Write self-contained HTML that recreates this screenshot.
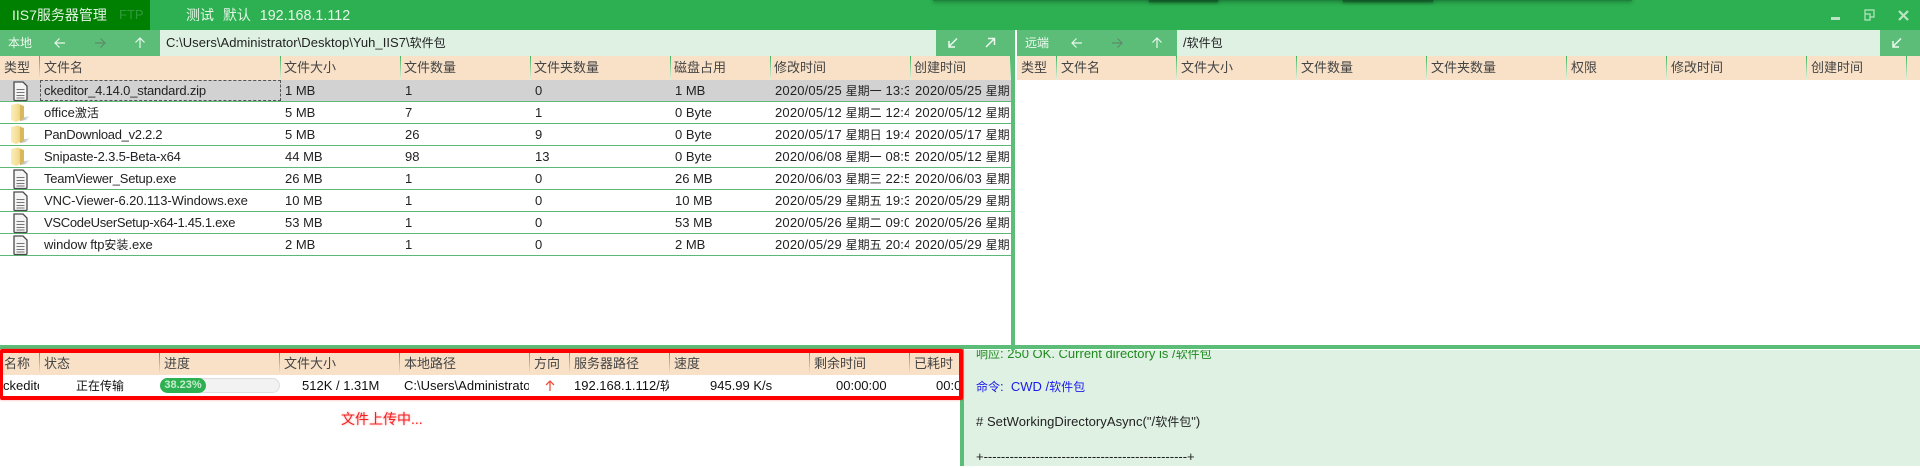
<!DOCTYPE html>
<html><head><meta charset="utf-8">
<style>
*{box-sizing:border-box}
html,body{margin:0;padding:0;width:1920px;height:466px;overflow:hidden;background:#fff;font-family:"Liberation Sans","Noto Sans CJK SC",sans-serif;color:#222}
.a{position:absolute;white-space:nowrap}
.t{font-size:13px;line-height:22px;height:22px;overflow:hidden;white-space:nowrap;position:absolute}
.d{letter-spacing:.18px}
.c{font-size:12px;letter-spacing:0}
.h{font-size:13px;line-height:24px;color:#444;position:absolute;white-space:nowrap}
.hb{position:absolute;background:#f8e1c7}
.sep{position:absolute;width:1px;background:linear-gradient(#3fb560,#e8f0e0)}
.rl{position:absolute;height:1px;background:#5cb876;left:0;width:1011px}
svg{position:absolute;overflow:visible}
</style></head><body>
<!-- title -->
<div class="a" style="left:0;top:0;width:1920px;height:30px;background:#2db051"></div>
<div class="a" style="left:933px;top:-3px;width:699px;height:4px;box-shadow:0 1px 4px 0 rgba(0,50,20,.45);background:rgba(0,50,20,.35)"></div>
<div class="a" style="left:1149px;top:-3px;width:69px;height:5px;box-shadow:0 1px 3px 0 rgba(0,40,15,.45);background:rgba(0,40,15,.45)"></div>
<div class="a" style="left:1343px;top:-3px;width:90px;height:5px;box-shadow:0 1px 3px 0 rgba(0,40,15,.45);background:rgba(0,40,15,.45)"></div>
<div class="a" style="left:0;top:0;width:150px;height:30px;background:#008000"></div>
<div class="a" style="left:12px;top:0;line-height:30px;font-size:14px;color:#e4f5e6">IIS7服务器管理</div>
<div class="a" style="left:119px;top:0;line-height:30px;font-size:13px;color:#2f9a3c">FTP</div>
<div class="a" style="left:186px;top:0;line-height:30px;font-size:14px;color:#e4f5e6;word-spacing:5px">测试 默认 <span style="font-size:14.3px">192.168.1.112</span></div>
<svg style="left:1820px;top:8px" width="100" height="18" fill="none" stroke="#b9e5c4" stroke-width="2">
<path d="M11 10.500H20" stroke-width="3"/>
<path d="M45 5.500V1H54V8H50M45 5H50V11H45Z" stroke-width="1.2" transform="translate(0,1)" />
<path d="M79 3L88 12M88 3L79 12" stroke-width="2.2"/>
</svg>
<!-- local toolbar -->
<div class="a" style="left:0;top:30px;width:1011px;height:26px;background:#dff1e3"></div>
<div class="a" style="left:0;top:30px;width:160px;height:26px;background:#5cbd78"></div>
<div class="a" style="left:8px;top:30px;line-height:26px;font-size:12px;color:#eef9f0">本地</div>
<svg style="left:0;top:30px" width="160" height="26" fill="none" stroke-width="1.2">
<path d="M65 13H55M59.500 8.500L55 13L59.500 17.500" stroke="#e8f7ec"/>
<path d="M95 13H105M100.500 8.500L105 13L100.500 17.500" stroke="#5f8a6c"/>
<path d="M140 18V8M135.500 12.500L140 8L144.500 12.500" stroke="#e8f7ec"/>
</svg>
<div class="a" style="left:166px;top:30px;line-height:26px;font-size:13px;color:#222;letter-spacing:.04px">C:\Users\Administrator\Desktop\Yuh_IIS7\<span class="c">软件包</span></div>
<div class="a" style="left:936px;top:30px;width:75px;height:26px;background:#5cbd78"></div>
<svg style="left:936px;top:30px" width="75" height="26" fill="none" stroke="#eef9f0" stroke-width="1.500">
<path d="M21 8.500L13 16.500M13 11V17H19"/>
<path d="M50 17L58 9M52 8.500H58.500V15"/>
</svg>
<!-- divider -->
<div class="a" style="left:1011px;top:30px;width:4px;height:320px;background:#5cbd78"></div>
<!-- remote toolbar -->
<div class="a" style="left:1017px;top:30px;width:903px;height:26px;background:#dff1e3"></div>
<div class="a" style="left:1017px;top:30px;width:160px;height:26px;background:#5cbd78"></div>
<div class="a" style="left:1025px;top:30px;line-height:26px;font-size:12px;color:#eef9f0">远端</div>
<svg style="left:1017px;top:30px" width="160" height="26" fill="none" stroke-width="1.2">
<path d="M65 13H55M59.500 8.500L55 13L59.500 17.500" stroke="#e8f7ec"/>
<path d="M95 13H105M100.500 8.500L105 13L100.500 17.500" stroke="#5f8a6c"/>
<path d="M140 18V8M135.500 12.500L140 8L144.500 12.500" stroke="#e8f7ec"/>
</svg>
<div class="a" style="left:1183px;top:30px;line-height:26px;font-size:13px;color:#222">/<span class="c">软件包</span></div>
<div class="a" style="left:1880px;top:30px;width:40px;height:26px;background:#5cbd78"></div>
<svg style="left:1880px;top:30px" width="40" height="26" fill="none" stroke="#eef9f0" stroke-width="1.500">
<path d="M21 8.500L13 16.500M13 11V17H19"/>
</svg>
<!-- local header -->
<div class="hb" style="left:0;top:56px;width:1011px;height:24px"></div>
<div class="h" style="left:4px;top:56px">类型</div><div class="h" style="left:44px;top:56px">文件名</div><div class="h" style="left:284px;top:56px">文件大小</div><div class="h" style="left:404px;top:56px">文件数量</div><div class="h" style="left:534px;top:56px">文件夹数量</div><div class="h" style="left:674px;top:56px">磁盘占用</div><div class="h" style="left:774px;top:56px">修改时间</div><div class="h" style="left:914px;top:56px">创建时间</div>
<div class="sep" style="left:39px;top:56px;height:24px"></div><div class="sep" style="left:280px;top:56px;height:24px"></div><div class="sep" style="left:400px;top:56px;height:24px"></div><div class="sep" style="left:530px;top:56px;height:24px"></div><div class="sep" style="left:670px;top:56px;height:24px"></div><div class="sep" style="left:770px;top:56px;height:24px"></div><div class="sep" style="left:910px;top:56px;height:24px"></div><div class="sep" style="left:1010px;top:56px;height:24px"></div>
<!-- remote header -->
<div class="hb" style="left:1017px;top:56px;width:903px;height:24px"></div>
<div class="h" style="left:1021px;top:56px">类型</div><div class="h" style="left:1061px;top:56px">文件名</div><div class="h" style="left:1181px;top:56px">文件大小</div><div class="h" style="left:1301px;top:56px">文件数量</div><div class="h" style="left:1431px;top:56px">文件夹数量</div><div class="h" style="left:1571px;top:56px">权限</div><div class="h" style="left:1671px;top:56px">修改时间</div><div class="h" style="left:1811px;top:56px">创建时间</div>
<div class="sep" style="left:1056px;top:56px;height:24px"></div><div class="sep" style="left:1176px;top:56px;height:24px"></div><div class="sep" style="left:1296px;top:56px;height:24px"></div><div class="sep" style="left:1426px;top:56px;height:24px"></div><div class="sep" style="left:1566px;top:56px;height:24px"></div><div class="sep" style="left:1666px;top:56px;height:24px"></div><div class="sep" style="left:1806px;top:56px;height:24px"></div><div class="sep" style="left:1906px;top:56px;height:24px"></div>
<!-- selected row -->
<div class="a" style="left:0;top:80px;width:1011px;height:21px;background:#d2d2d2"></div>
<div class="a" style="left:40px;top:80px;width:241px;height:21px;border:1px dashed #555"></div>
<!-- row lines -->
<div class="rl" style="top:101px"></div><div class="rl" style="top:123px"></div><div class="rl" style="top:145px"></div><div class="rl" style="top:167px"></div><div class="rl" style="top:189px"></div><div class="rl" style="top:211px"></div><div class="rl" style="top:233px"></div><div class="rl" style="top:255px"></div>
<!-- icons -->
<svg style="left:0;top:0" width="40" height="260">
<defs>
<linearGradient id="fg" x1="0" x2="1" y1="0" y2="0"><stop offset="0" stop-color="#fbeeb9"/><stop offset=".55" stop-color="#f3dd92"/><stop offset="1" stop-color="#dcbc5e"/></linearGradient>
<linearGradient id="sh" x1="0" x2="1" y1="0" y2="0"><stop offset="0" stop-color="#aaa"/><stop offset="1" stop-color="#eee"/></linearGradient>
</defs>
<g fill="#f4f4f4" stroke="#4a4a4a" stroke-width="1.300">
<path d="M14 82H23L27 86V99.500Q27 100.500 26 100.500H15Q14 100.500 14 99.500Z"/>
<path d="M14 170H23L27 174V187.500Q27 188.500 26 188.500H15Q14 188.500 14 187.500Z"/>
<path d="M14 192H23L27 196V209.500Q27 210.500 26 210.500H15Q14 210.500 14 209.500Z"/>
<path d="M14 214H23L27 218V231.500Q27 232.500 26 232.500H15Q14 232.500 14 231.500Z"/>
<path d="M14 236H23L27 240V253.500Q27 254.500 26 254.500H15Q14 254.500 14 253.500Z"/>
</g>
<g stroke="#777" stroke-width="1" fill="none">
<path d="M16.500 89.500H24.500M16.500 92.500H24.500M16.500 95.500H24.500M16.500 98H24.500"/>
<path d="M16.500 177.500H24.500M16.500 180.500H24.500M16.500 183.500H24.500M16.500 186H24.500"/>
<path d="M16.500 199.500H24.500M16.500 202.500H24.500M16.500 205.500H24.500M16.500 208H24.500"/>
<path d="M16.500 221.500H24.500M16.500 224.500H24.500M16.500 227.500H24.500M16.500 230H24.500"/>
<path d="M16.500 243.500H24.500M16.500 246.500H24.500M16.500 249.500H24.500M16.500 252H24.500"/>
</g>
<g transform="translate(0,0)">
<path d="M20 118L30 116L26 120L20 121Z" fill="url(#sh)"/><path d="M11 105L18 103.500L24 106V118L16 122L11 120Z" fill="url(#fg)"/><path d="M20 105L24 107V118L20 121Z" fill="#d9b85c"/>
</g>
<g transform="translate(0,22)">
<path d="M20 118L30 116L26 120L20 121Z" fill="url(#sh)"/><path d="M11 105L18 103.500L24 106V118L16 122L11 120Z" fill="url(#fg)"/><path d="M20 105L24 107V118L20 121Z" fill="#d9b85c"/>
</g>
<g transform="translate(0,44)">
<path d="M20 118L30 116L26 120L20 121Z" fill="url(#sh)"/><path d="M11 105L18 103.500L24 106V118L16 122L11 120Z" fill="url(#fg)"/><path d="M20 105L24 107V118L20 121Z" fill="#d9b85c"/>
</g>
</svg>
<!-- rows -->
<div class="t" style="left:44px;top:80px;color:#222;letter-spacing:-.18px">ckeditor_4.14.0_standard.zip</div><div class="t" style="left:285px;top:80px">1 MB</div><div class="t" style="left:405px;top:80px">1</div><div class="t" style="left:535px;top:80px">0</div><div class="t" style="left:675px;top:80px">1 MB</div><div class="t d" style="left:775px;top:80px;width:134px">2020/05/25 <span class="c">星期一</span> 13:33:20</div><div class="t d" style="left:915px;top:80px;width:94px">2020/05/25 <span class="c">星期一</span> 13:33</div>
<div class="t" style="left:44px;top:102px">office<span class="c">激活</span></div><div class="t" style="left:285px;top:102px">5 MB</div><div class="t" style="left:405px;top:102px">7</div><div class="t" style="left:535px;top:102px">1</div><div class="t" style="left:675px;top:102px">0 Byte</div><div class="t d" style="left:775px;top:102px;width:134px">2020/05/12 <span class="c">星期二</span> 12:45:10</div><div class="t d" style="left:915px;top:102px;width:94px">2020/05/12 <span class="c">星期二</span> 12:45</div>
<div class="t" style="left:44px;top:124px;letter-spacing:-.3px">PanDownload_v2.2.2</div><div class="t" style="left:285px;top:124px">5 MB</div><div class="t" style="left:405px;top:124px">26</div><div class="t" style="left:535px;top:124px">9</div><div class="t" style="left:675px;top:124px">0 Byte</div><div class="t d" style="left:775px;top:124px;width:134px">2020/05/17 <span class="c">星期日</span> 19:45:10</div><div class="t d" style="left:915px;top:124px;width:94px">2020/05/17 <span class="c">星期日</span> 19:45</div>
<div class="t" style="left:44px;top:146px;letter-spacing:-.15px">Snipaste-2.3.5-Beta-x64</div><div class="t" style="left:285px;top:146px">44 MB</div><div class="t" style="left:405px;top:146px">98</div><div class="t" style="left:535px;top:146px">13</div><div class="t" style="left:675px;top:146px">0 Byte</div><div class="t d" style="left:775px;top:146px;width:134px">2020/06/08 <span class="c">星期一</span> 08:55:10</div><div class="t d" style="left:915px;top:146px;width:94px">2020/05/12 <span class="c">星期二</span> 08:55</div>
<div class="t" style="left:44px;top:168px;letter-spacing:-.25px">TeamViewer_Setup.exe</div><div class="t" style="left:285px;top:168px">26 MB</div><div class="t" style="left:405px;top:168px">1</div><div class="t" style="left:535px;top:168px">0</div><div class="t" style="left:675px;top:168px">26 MB</div><div class="t d" style="left:775px;top:168px;width:134px">2020/06/03 <span class="c">星期三</span> 22:55:10</div><div class="t d" style="left:915px;top:168px;width:94px">2020/06/03 <span class="c">星期三</span> 22:55</div>
<div class="t" style="left:44px;top:190px;letter-spacing:-.1px">VNC-Viewer-6.20.113-Windows.exe</div><div class="t" style="left:285px;top:190px">10 MB</div><div class="t" style="left:405px;top:190px">1</div><div class="t" style="left:535px;top:190px">0</div><div class="t" style="left:675px;top:190px">10 MB</div><div class="t d" style="left:775px;top:190px;width:134px">2020/05/29 <span class="c">星期五</span> 19:35:10</div><div class="t d" style="left:915px;top:190px;width:94px">2020/05/29 <span class="c">星期五</span> 19:35</div>
<div class="t" style="left:44px;top:212px;letter-spacing:-.3px">VSCodeUserSetup-x64-1.45.1.exe</div><div class="t" style="left:285px;top:212px">53 MB</div><div class="t" style="left:405px;top:212px">1</div><div class="t" style="left:535px;top:212px">0</div><div class="t" style="left:675px;top:212px">53 MB</div><div class="t d" style="left:775px;top:212px;width:134px">2020/05/26 <span class="c">星期二</span> 09:05:10</div><div class="t d" style="left:915px;top:212px;width:94px">2020/05/26 <span class="c">星期二</span> 09:05</div>
<div class="t" style="left:44px;top:234px;letter-spacing:-.1px">window ftp<span class="c">安装</span>.exe</div><div class="t" style="left:285px;top:234px">2 MB</div><div class="t" style="left:405px;top:234px">1</div><div class="t" style="left:535px;top:234px">0</div><div class="t" style="left:675px;top:234px">2 MB</div><div class="t d" style="left:775px;top:234px;width:134px">2020/05/29 <span class="c">星期五</span> 20:45:10</div><div class="t d" style="left:915px;top:234px;width:94px">2020/05/29 <span class="c">星期五</span> 20:45</div>
<!-- horizontal bar -->
<div class="a" style="left:0;top:345px;width:1920px;height:4px;background:#5cbd78"></div>
<!-- log -->
<div class="a" style="left:960px;top:345px;width:4px;height:121px;background:#5cbd78"></div>
<div class="a" style="left:964px;top:350px;width:956px;height:116px;background:#dff1e3;overflow:hidden"></div>
<div class="a" style="left:976px;top:343px;line-height:22px;font-size:13px;color:#1f8a1f;clip-path:inset(7px 0 0 0)"><span class="c">响应</span>: 250 OK. Current directory is /<span class="c">软件包</span></div>
<div class="a" style="left:976px;top:376px;line-height:22px;font-size:13px;color:#1a1aee"><span class="c">命令</span>:&nbsp; CWD /<span class="c">软件包</span></div>
<div class="a" style="left:976px;top:411px;line-height:22px;font-size:13px;color:#222;letter-spacing:.05px"># SetWorkingDirectoryAsync("/<span class="c">软件包</span>")</div>
<div class="a" style="left:976px;top:446px;line-height:22px;font-size:13px;color:#222">+-----------------------------------------------+</div>
<!-- transfer -->
<div class="hb" style="left:0;top:353px;width:960px;height:22px"></div>
<div class="h" style="left:4px;top:352px">名称</div><div class="h" style="left:44px;top:352px">状态</div><div class="h" style="left:164px;top:352px">进度</div><div class="h" style="left:284px;top:352px">文件大小</div><div class="h" style="left:404px;top:352px">本地路径</div><div class="h" style="left:534px;top:352px">方向</div><div class="h" style="left:574px;top:352px">服务器路径</div><div class="h" style="left:674px;top:352px">速度</div><div class="h" style="left:814px;top:352px">剩余时间</div><div class="h" style="left:914px;top:352px">已耗时</div>
<div class="sep" style="left:39px;top:353px;height:22px"></div><div class="sep" style="left:159px;top:353px;height:22px"></div><div class="sep" style="left:279px;top:353px;height:22px"></div><div class="sep" style="left:399px;top:353px;height:22px"></div><div class="sep" style="left:529px;top:353px;height:22px"></div><div class="sep" style="left:569px;top:353px;height:22px"></div><div class="sep" style="left:669px;top:353px;height:22px"></div><div class="sep" style="left:809px;top:353px;height:22px"></div><div class="sep" style="left:909px;top:353px;height:22px"></div>
<div class="t" style="left:3px;top:375px;width:36px;color:#111">ckeditor_4.14.0_standard.zip</div>
<div class="t" style="left:76px;top:375px;color:#111;font-size:12px">正在传输</div>
<div class="a" style="left:160px;top:378px;width:120px;height:15px;border-radius:8px;background:#f2f2f2;border:1px solid #ddd"></div>
<div class="a" style="left:160px;top:378px;width:46px;height:15px;border-radius:8px;background:#2db051;color:#c5edcf;font-size:11px;line-height:15px;text-align:center;font-weight:bold">38.23%</div>
<div class="t" style="left:302px;top:375px;color:#111">512K / 1.31M</div>
<div class="t" style="left:404px;top:375px;width:125px;color:#111">C:\Users\Administrator\Desktop</div>
<svg style="left:520px;top:374px" width="40" height="22" fill="none" stroke="#ee5040" stroke-width="1.300"><path d="M30 17V7M26 11L30 7L34 11"/></svg>
<div class="t" style="left:574px;top:375px;width:95px;color:#111">192.168.1.112/<span class="c">软件包</span></div>
<div class="t" style="left:710px;top:375px;color:#111">945.99 K/s</div>
<div class="t" style="left:836px;top:375px;color:#111">00:00:00</div>
<div class="t" style="left:936px;top:375px;width:24px;color:#111">00:00:00</div>
<!-- red box -->
<div class="a" style="left:0;top:349px;width:963px;height:51px;border:4px solid #f00;border-left-width:3px;border-radius:2px;box-shadow:0 0 2px rgba(255,0,0,.4)"></div>
<div class="a" style="left:341px;top:408px;line-height:22px;font-size:14px;color:#f52020;text-shadow:0 0 2px rgba(255,60,60,.5)">文件上传中...</div>
</body></html>
